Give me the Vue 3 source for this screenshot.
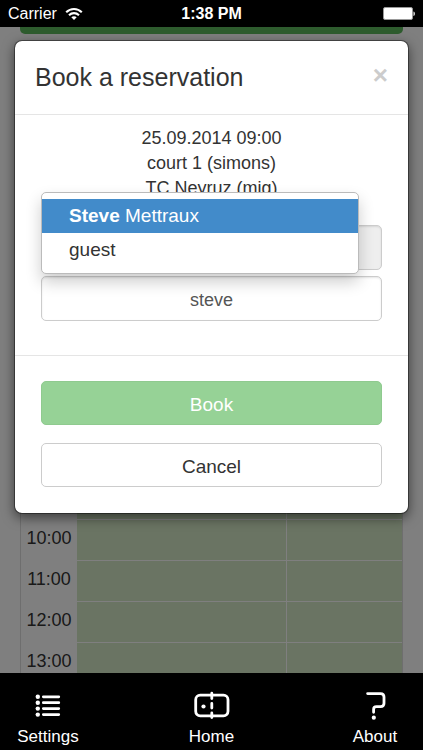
<script setup>
import { ref } from 'vue'

const hours = ['07:00', '08:00', '09:00', '10:00', '11:00', '12:00', '13:00']
const details = ['25.09.2014 09:00', 'court 1 (simons)', 'TC Neyruz (mig)']
const firstPlayer = ref('')
const secondPlayer = ref('steve')
</script>

<template>
  <div class="app">
    <header class="status">
      <span class="carrier">
        Carrier
        <svg width="18" height="14" viewBox="0 0 18 14" fill="none" stroke="#fff" stroke-width="2.1" aria-hidden="true">
          <path d="M1.2 5.3C5.6 0.9 12.4 0.9 16.8 5.3" />
          <path d="M4 8.2C6.9 5.4 11.1 5.4 14 8.2" />
          <path d="M9 13L6.3 10.3C7.8 8.9 10.2 8.9 11.7 10.3Z" fill="#fff" stroke="none" />
        </svg>
      </span>
      <span class="clock">1:38 PM</span>
      <svg class="battery" width="32" height="14" viewBox="0 0 32 14" aria-hidden="true">
        <rect x="0.5" y="0.5" width="29" height="12" rx="1.5" fill="#fff" stroke="#999" />
        <path d="M30.5 4.5C32.300 5 32.300 8.500 30.5 9Z" fill="#fff" />
      </svg>
    </header>

    <main class="stage">
      <div class="page">
        <div class="banner"></div>
        <table class="schedule">
          <colgroup>
            <col class="col-hour" />
            <col />
            <col class="col-side" />
          </colgroup>
          <tbody>
            <tr v-for="hour in hours" :key="hour">
              <th scope="row">{{ hour }}</th>
              <td></td>
              <td></td>
            </tr>
          </tbody>
        </table>
      </div>

      <div class="backdrop">
        <form class="modal" role="dialog" aria-labelledby="title" @submit.prevent>
          <div class="modal-header">
            <h1 id="title">Book a reservation</h1>
            <button type="button" class="close" aria-label="Close">×</button>
          </div>
          <div class="modal-body">
            <p v-for="line in details" :key="line">{{ line }}</p>
            <div class="fields">
              <input v-model="firstPlayer" class="field" type="text" aria-label="First player" readonly />
              <div class="typeahead">
                <input v-model="secondPlayer" class="field" type="text" aria-label="Second player" autocomplete="off" />
                <ul class="menu">
                  <li><a href="#" class="active"><strong>Steve</strong> Mettraux</a></li>
                  <li><a href="#">guest</a></li>
                </ul>
              </div>
            </div>
          </div>
          <div class="modal-footer">
            <button type="submit" class="btn btn-book">Book</button>
            <button type="button" class="btn">Cancel</button>
          </div>
        </form>
      </div>
    </main>

    <nav class="tabs">
      <a href="#">
        <svg width="32" height="32" viewBox="0 0 32 32" stroke="#fff" stroke-width="2.7" stroke-linecap="round" fill="#fff" aria-hidden="true">
          <path d="M11.300 6.800H26.800M11.300 12.700H26.800M11.300 18.600H26.800M11.300 24.600H26.800" />
          <g stroke="none">
            <circle cx="5.800" cy="6.800" r="2.200" />
            <circle cx="5.800" cy="12.700" r="2.200" />
            <circle cx="5.800" cy="18.600" r="2.200" />
            <circle cx="5.800" cy="24.600" r="2.200" />
          </g>
        </svg>
        Settings
      </a>
      <a href="#">
        <svg width="38" height="32" viewBox="0 0 38 32" stroke="#fff" stroke-width="2.800" stroke-linecap="round" fill="none" aria-hidden="true">
          <rect x="2.700" y="5.200" width="32.300" height="20.600" rx="4.500" />
          <path d="M18.800 3.200V8.500M18.800 13.500V18M18.800 23V27.600" />
          <circle cx="10.500" cy="16.500" r="2.100" fill="#fff" stroke="none" />
        </svg>
        Home
      </a>
      <a href="#">
        <svg width="32" height="32" viewBox="0 0 32 32" stroke="#fff" stroke-width="2.800" stroke-linecap="round" fill="none" aria-hidden="true">
          <path d="M8.600 3.600H21.500Q25 3.600 25 7V13.300Q25 16.700 21.500 16.700H17.500Q14.600 16.700 14.600 19.500V22.300" />
          <circle cx="14.800" cy="27.700" r="2.100" fill="#fff" stroke="none" />
        </svg>
        About
      </a>
    </nav>
  </div>
</template>

<style>
body {
  background: #000;
}
</style>

<style scoped>
* {
  box-sizing: border-box;
}

.app {
  display: flex;
  flex-direction: column;
  height: 100vh;
  font-family: "Helvetica Neue", "Liberation Sans", Arial, sans-serif;
  font-size: 18px;
  line-height: 25px;
  color: #333;
}

.status {
  display: grid;
  grid-template-columns: 1fr auto 1fr;
  align-items: center;
  height: 27px;
  padding: 0 8px;
  background: #000;
  color: #fff;
  font-size: 16px;
}

.carrier {
  display: flex;
  align-items: center;
  gap: 8px;
}

.clock {
  font-weight: bold;
}

.battery {
  justify-self: end;
}

.stage {
  display: grid;
  grid-template-columns: 100%;
  grid-template-rows: 100%;
  flex: 1;
  min-height: 0;
  overflow: hidden;
}

.page,
.backdrop {
  grid-area: 1 / 1;
}

.page {
  padding: 0 20px;
  overflow: hidden;
  background: #fff;
}

.banner {
  height: 7px;
  border-radius: 0 0 5px 5px;
  background: #5cb85c;
}

.schedule {
  width: 100%;
  margin-top: 362px;
  border: 1px solid #ddd;
  border-top: 0;
  border-spacing: 0;
  table-layout: fixed;
}

.col-hour {
  width: 56px;
}

.col-side {
  width: 116px;
}

.schedule th,
.schedule td {
  height: 41px;
  padding: 0;
}

.schedule th {
  padding-bottom: 2px;
  font-weight: normal;
  text-align: center;
}

.schedule td {
  border-top: 1px solid #fff;
  background: #d4e8c6;
}

.schedule td + td {
  border-left: 1px solid #fff;
}

.backdrop {
  z-index: 1;
  padding: 13px 14px;
  background: rgba(0, 0, 0, 0.5);
}

.modal {
  border: 1px solid rgba(0, 0, 0, 0.4);
  border-radius: 8px;
  background: #fff;
  background-clip: padding-box;
  box-shadow: 0 4px 12px rgba(0, 0, 0, 0.5);
}

.modal-header {
  display: flex;
  align-items: center;
  justify-content: space-between;
  height: 74px;
  padding: 0 20px;
  border-bottom: 1px solid #e5e5e5;
}

h1 {
  margin: 0;
  font-size: 25px;
  font-weight: normal;
}

.close {
  padding: 0 0 6px;
  border: 0;
  background: none;
  color: #ccc;
  font: bold 26px/26px "Liberation Sans", Arial, sans-serif;
}

.modal-body {
  padding: 11px 26px 34px;
  text-align: center;
}

p {
  margin: 0;
}

.fields {
  display: flex;
  flex-direction: column;
  gap: 6px;
  margin-top: 24px;
}

.field {
  display: block;
  width: 100%;
  height: 45px;
  padding: 3px 16px 0;
  border: 1px solid #ccc;
  border-radius: 5px;
  outline: 0;
  background: #fff;
  box-shadow: inset 0 1px 2px rgba(0, 0, 0, 0.1);
  color: #555;
  font: inherit;
  text-align: center;
}

.field:read-only {
  background: #eee;
}

.typeahead {
  position: relative;
}

.menu {
  position: absolute;
  right: 23px;
  bottom: 100%;
  left: 0;
  margin: 0 0 2px;
  padding: 6px 0;
  border: 1px solid #bbb;
  border-radius: 5px;
  background: #fff;
  box-shadow: 0 8px 16px rgba(0, 0, 0, 0.2);
  font-size: 19px;
  list-style: none;
  text-align: left;
}

.menu a {
  display: block;
  padding: 0 27px;
  color: #333;
  line-height: 34px;
  text-decoration: none;
}

.menu a.active {
  background: #428bca;
  color: #fff;
}

.modal-footer {
  display: flex;
  flex-direction: column;
  gap: 18px;
  padding: 25px 26px 26px;
  border-top: 1px solid #e5e5e5;
}

.btn {
  height: 44px;
  padding: 2px 16px 0;
  border: 1px solid #ccc;
  border-radius: 5px;
  background: #fff;
  color: #333;
  font: inherit;
  font-size: 19px;
}

.btn-book {
  border-color: #8fca8f;
  background: #96d296;
  color: #fff;
}

.tabs {
  display: flex;
  justify-content: space-between;
  padding: 17px 8px 3px;
  background: #000;
}

.tabs a {
  display: flex;
  flex-direction: column;
  align-items: center;
  gap: 5px;
  width: 80px;
  color: #fff;
  font-size: 17px;
  line-height: 20px;
  text-decoration: none;
}
</style>
